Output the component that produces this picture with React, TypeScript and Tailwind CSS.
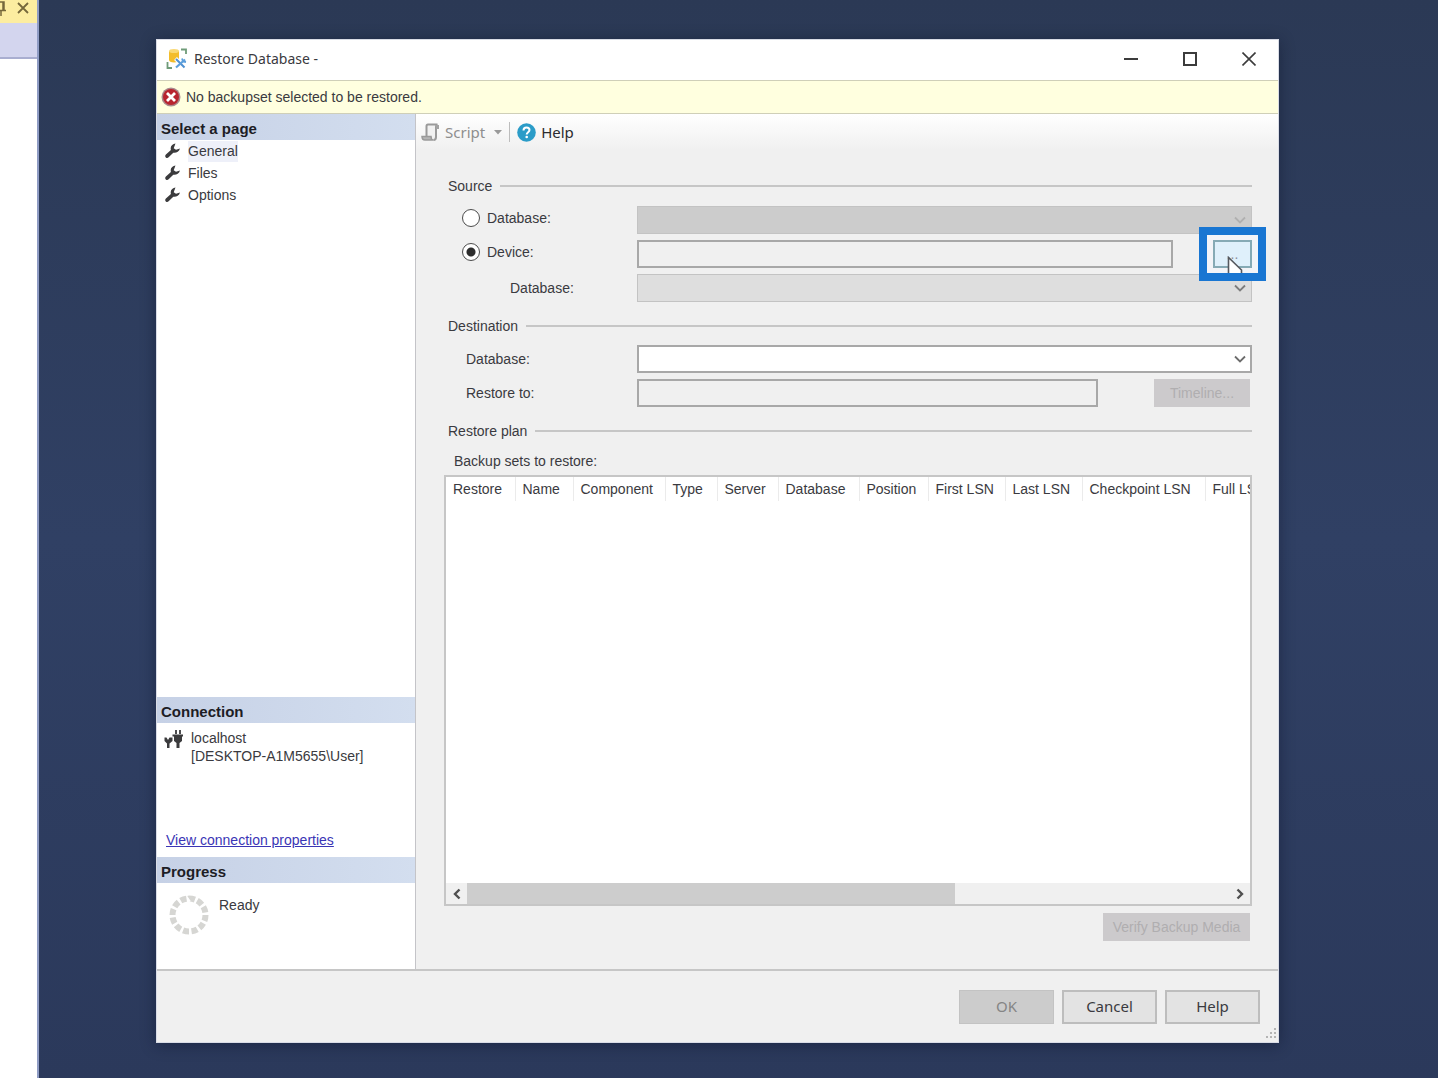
import { useState } from 'react';
import type { ReactNode } from 'react';

const pages = ['General', 'Files', 'Options'];

const columns = [
  { name: 'Restore', width: 'w-[69px]' },
  { name: 'Name', width: 'w-[58px]' },
  { name: 'Component', width: 'w-[92px]' },
  { name: 'Type', width: 'w-[52px]' },
  { name: 'Server', width: 'w-[61px]' },
  { name: 'Database', width: 'w-[81px]' },
  { name: 'Position', width: 'w-[69px]' },
  { name: 'First LSN', width: 'w-[77px]' },
  { name: 'Last LSN', width: 'w-[77px]' },
  { name: 'Checkpoint LSN', width: 'w-[123px]' },
  { name: 'Full LSN', width: 'w-[90px]' },
];

function RestoreIcon() {
  return (
    <svg width="22" height="22" viewBox="0 0 22 22" aria-hidden="true">
      <path d="M3 3v9c0 1.500 2 2.500 5 2.500s5-1 5-2.500V3z" fill="#f3bd2c" />
      <ellipse cx="8" cy="3" rx="5" ry="2" fill="#f9d975" />
      <path d="M15 1.500h5V6" fill="none" stroke="#6f9b78" strokeWidth="1.800" />
      <path d="M1.500 14v6H6" fill="none" stroke="#6f9b78" strokeWidth="1.800" />
      <path d="M9.500 10.500l9 9M18.500 11l-9 8.500" stroke="#fff" strokeWidth="4" />
      <path d="M10 11l8.500 8.500" stroke="#4f8fd0" strokeWidth="2" />
      <path d="M19 11.500l-9 8" stroke="#5d9fdc" strokeWidth="2.200" />
      <path d="M16 10.500l1 3 3 .5" fill="none" stroke="#5d9fdc" strokeWidth="1.800" />
    </svg>
  );
}

function ErrorIcon() {
  return (
    <svg width="20" height="20" viewBox="0 0 20 20" aria-hidden="true">
      <circle cx="10" cy="10" r="9.500" fill="#a9898c" />
      <circle cx="10" cy="10" r="8" fill="#b8242f" />
      <path d="M6 6l8 8M14 6l-8 8" stroke="#fff" strokeWidth="2.800" />
    </svg>
  );
}

function WrenchIcon() {
  return (
    <svg width="16" height="16" viewBox="0 0 16 16" aria-hidden="true">
      <path
        d="M10.500.5C8 .8 5.800 2.600 5.700 5c0 .8 0 1.300.2 1.900L.9 11.600c-.9.800-.9 2-.1 2.800.8.800 2 .8 2.800-.1l4.700-4.600c2.700.5 5.700-.9 6.700-4.200l-4 1.300-2.300-1.600z"
        fill="#3b3b3d"
      />
    </svg>
  );
}

function PlugsIcon() {
  return (
    <svg width="19" height="20" viewBox="0 0 19 20" aria-hidden="true">
      <path d="M12 1v4M16 1v4" stroke="#3b3b3d" strokeWidth="1.800" />
      <path
        d="M8.500 5.500H19v2h-1v4.500l-2.500 2v5h-3v-5L10 12V7.500H8.500zM.5 8.500h2l1.500 2.500 1.500-2.500h3V12L5.500 14.500V19H3v-4.500L.5 12z"
        fill="#3b3b3d"
      />
    </svg>
  );
}

function ScriptIcon() {
  return (
    <svg width="19" height="19" viewBox="0 0 19 19" aria-hidden="true">
      <path
        d="M5.500 13.500V3.200C5.500 2 6 1.500 7 1.500h9.500c-1.200.3-1.500 1-1.500 2.300V14c0 2-.8 3-2.500 3"
        fill="#f1f1f1"
        stroke="#9a9a9a"
        strokeWidth="2"
      />
      <path
        d="M1 13.500h9c0 2 .8 3.500 2.500 3.500H4c-2 0-3-1.500-3-3.500z"
        fill="#b5b5b5"
        stroke="#9a9a9a"
        strokeWidth="1.500"
      />
      <path d="M15 2h3v4h-3z" fill="#a3a3a3" />
    </svg>
  );
}

function Chevron({ className }: { className: string }) {
  return (
    <svg
      width="12"
      height="8"
      viewBox="0 0 12 8"
      aria-hidden="true"
      className={`pointer-events-none absolute right-[6px] top-[10px] ${className}`}
    >
      <path d="M1 1.500l5 5 5-5" fill="none" stroke="currentColor" strokeWidth="1.800" />
    </svg>
  );
}

type ComboProps = {
  id: string;
  label: string;
  className: string;
  arrow: string;
  disabled?: boolean;
};

function Combo({ id, label, className, arrow, disabled }: ComboProps) {
  return (
    <div className="relative flex flex-1">
      <select
        id={id}
        aria-label={label}
        disabled={disabled}
        className={`h-7 w-full appearance-none px-2 outline-none ${className}`}
      />
      <Chevron className={arrow} />
    </div>
  );
}

function GroupTitle({ children }: { children: ReactNode }) {
  return (
    <div className="flex h-5 items-center gap-2 pl-1">
      <h3>{children}</h3>
      <div className="h-[2px] flex-1 bg-[#c6c6c6]" />
    </div>
  );
}

function SideTitle({ children }: { children: ReactNode }) {
  return (
    <h2 className="flex h-[26px] items-center bg-gradient-to-r from-[#c6d1e6] to-[#d3deef] pl-1 pt-1 text-[15px] font-bold text-[#1d1d25]">
      {children}
    </h2>
  );
}

function Sidebar() {
  return (
    <aside className="flex w-[259px] shrink-0 flex-col border-r border-[#c4c4c8] bg-white">
      <SideTitle>Select a page</SideTitle>
      <nav className="flex-1">
        {pages.map((page) => (
          <a key={page} href="#" className="flex h-[22px] items-center gap-[7px] pl-2">
            <WrenchIcon />
            <span className={page === 'General' ? 'bg-[#eef0f9]' : ''}>{page}</span>
          </a>
        ))}
      </nav>

      <SideTitle>Connection</SideTitle>
      <div className="flex h-[134px] flex-col justify-between pb-[6px] pl-[7px] pt-[6px]">
        <div className="flex gap-2">
          <PlugsIcon />
          <p className="leading-[18px]">
            localhost
            <br />
            [DESKTOP-A1M5655\User]
          </p>
        </div>
        <a href="#" className="pl-[2px] text-[#3a35b5] underline">
          View connection properties
        </a>
      </div>

      <SideTitle>Progress</SideTitle>
      <div className="flex h-[86px] items-start gap-[10px] pl-3 pt-3">
        <svg width="40" height="40" viewBox="0 0 40 40" aria-hidden="true">
          <circle
            cx="20"
            cy="20"
            r="16.500"
            fill="none"
            stroke="#d6d6d3"
            strokeWidth="6"
            pathLength="120"
            strokeDasharray="7 3"
          />
        </svg>
        <span>Ready</span>
      </div>
    </aside>
  );
}

function Toolbar() {
  return (
    <div className="flex h-9 items-center bg-gradient-to-b from-white to-[#f0f0f0] pl-[5px] font-['Noto_Sans','Open_Sans',sans-serif] text-[15px]">
      <button type="button" disabled className="flex items-center gap-[5px] text-[#8e8e8e]">
        <ScriptIcon />
        Script
        <svg width="8" height="5" viewBox="0 0 8 5" aria-hidden="true" className="ml-1">
          <path d="M0 0h8L4 4.500z" fill="#9a9a9a" />
        </svg>
      </button>
      <div className="mx-[7px] h-5 w-px bg-[#bdbdbd]" />
      <button type="button" className="flex items-center gap-[5px] text-[#2b2b2e]">
        <svg width="19" height="19" viewBox="0 0 19 19" aria-hidden="true">
          <circle cx="9.500" cy="9.500" r="9.300" fill="#2b9cc8" />
          <path
            d="M6.500 7.500c0-2 1.300-3 3-3s3 1 3 2.600c0 2-2.800 2.200-2.800 4.400"
            fill="none"
            stroke="#fff"
            strokeWidth="2"
          />
          <circle cx="9.700" cy="14" r="1.300" fill="#fff" />
        </svg>
        Help
      </button>
    </div>
  );
}

type SourceRadioProps = {
  label: string;
  checked: boolean;
  onChange: () => void;
};

function SourceRadio({ label, checked, onChange }: SourceRadioProps) {
  return (
    <label className="flex h-6 w-[193px] items-center gap-[7px] pl-[18px]">
      <input
        type="radio"
        name="source"
        checked={checked}
        onChange={onChange}
        className="size-[18px] appearance-none rounded-full border border-[#4c4c4c] bg-white checked:bg-[radial-gradient(circle,#2d2d2d_0_4px,white_5px)]"
      />
      {label}
    </label>
  );
}

function BrowseButton() {
  return (
    <div className="relative z-10 ml-10 w-[39px]">
      <div className="absolute -inset-x-[14px] -top-[13px] h-[54px] border-8 border-[#1976d2] bg-[#f3f4f8]" />
      <button
        type="button"
        aria-label="Browse for device"
        className="relative flex h-7 w-full items-center justify-center border-2 border-[#86aab5] bg-[#dff0fb] text-[#8a8f9c]"
      >
        ...
      </button>
      {/* Mouse pointer */}
      <svg
        width="18"
        height="17"
        viewBox="0 0 18 17"
        aria-hidden="true"
        className="absolute left-[14px] top-4"
      >
        <path d="M1.500 17V1.500L15 14v3z" fill="#fff" />
        <path d="M1.500 17V1.500L14.500 14v3" fill="none" stroke="#55585e" strokeWidth="1.600" />
      </svg>
    </div>
  );
}

function BackupSets() {
  return (
    <div className="mt-1 flex min-h-[200px] flex-1 flex-col border-2 border-[#c6c6c6] bg-white">
      <div className="w-0 min-w-full flex-1 overflow-hidden">
        <table className="w-[849px] table-fixed">
          <thead>
            <tr>
              {columns.map((column) => (
                <th
                  key={column.name}
                  scope="col"
                  className={`h-6 whitespace-nowrap border-r border-[#ebebeb] pl-[7px] text-left font-normal ${column.width}`}
                >
                  {column.name}
                </th>
              ))}
            </tr>
          </thead>
        </table>
      </div>
      <div className="flex h-[21px] bg-[#f0f0f0] text-[#505050]">
        <button type="button" aria-label="Scroll left" className="flex w-[21px] items-center justify-center">
          <svg width="8" height="12" viewBox="0 0 8 12" aria-hidden="true">
            <path d="M6.500 1.500L2 6l4.500 4.500" fill="none" stroke="currentColor" strokeWidth="2.400" />
          </svg>
        </button>
        <div className="flex-1">
          <div className="h-full w-[64%] bg-[#cdcdcd]" />
        </div>
        <button type="button" aria-label="Scroll right" className="flex w-[21px] items-center justify-center">
          <svg width="8" height="12" viewBox="0 0 8 12" aria-hidden="true">
            <path d="M1.500 1.500L6 6l-4.500 4.500" fill="none" stroke="currentColor" strokeWidth="2.400" />
          </svg>
        </button>
      </div>
    </div>
  );
}

function GeneralPage() {
  const [source, setSource] = useState('device');

  return (
    <section className="flex min-w-0 flex-1 flex-col">
      <Toolbar />
      <div className="flex flex-1 flex-col pb-7 pl-7 pr-[26px] pt-[26px]">
        {/* Source */}
        <GroupTitle>Source</GroupTitle>
        <div className="mt-[10px] flex flex-col gap-[6px]">
          <div className="flex">
            <SourceRadio
              label="Database:"
              checked={source === 'database'}
              onChange={() => setSource('database')}
            />
            <Combo
              id="source-database"
              label="Source database"
              disabled
              className="border border-[#c3c3c3] bg-[#cccccc]"
              arrow="text-[#b0b0b0]"
            />
          </div>
          <div className="flex">
            <SourceRadio
              label="Device:"
              checked={source === 'device'}
              onChange={() => setSource('device')}
            />
            <input
              type="text"
              aria-label="Device"
              readOnly
              className="h-7 min-w-0 flex-1 border-2 border-[#a8a8a8] bg-[#f0f0f0] px-2 outline-none"
            />
            <BrowseButton />
          </div>
          <div className="flex items-center">
            <label htmlFor="device-database" className="w-[193px] pl-[66px]">
              Database:
            </label>
            <Combo
              id="device-database"
              label="Device database"
              disabled
              className="border border-[#c3c3c3] bg-[#dedede]"
              arrow="text-[#7c7c7c]"
            />
          </div>
        </div>

        {/* Destination */}
        <div className="mt-[14px]">
          <GroupTitle>Destination</GroupTitle>
        </div>
        <div className="mt-[9px] flex flex-col gap-[6px]">
          <div className="flex items-center">
            <label htmlFor="target-database" className="w-[193px] pl-[22px]">
              Database:
            </label>
            <Combo
              id="target-database"
              label="Destination database"
              className="border-2 border-[#a8a8a8] bg-white"
              arrow="text-[#6c6c6c]"
            />
          </div>
          <div className="flex items-center">
            <label htmlFor="restore-to" className="w-[193px] pl-[22px]">
              Restore to:
            </label>
            <input
              id="restore-to"
              type="text"
              readOnly
              className="h-7 min-w-0 flex-1 border-2 border-[#a8a8a8] bg-[#f0f0f0] px-2 outline-none"
            />
            <button
              type="button"
              disabled
              className="ml-[56px] mr-[2px] h-7 w-[96px] bg-[#cccacc] text-[#b0aeb0]"
            >
              Timeline...
            </button>
          </div>
        </div>

        {/* Restore plan */}
        <div className="mt-[14px]">
          <GroupTitle>Restore plan</GroupTitle>
        </div>
        <p className="mt-[10px] pl-[10px] leading-5">Backup sets to restore:</p>
        <BackupSets />
        <button
          type="button"
          disabled
          className="mr-[2px] mt-[7px] h-7 w-[147px] self-end bg-[#cccacc] text-[#b0aeb0]"
        >
          Verify Backup Media
        </button>
      </div>
    </section>
  );
}

function RestoreDialog() {
  return (
    <div
      role="dialog"
      aria-labelledby="dialog-title"
      className="flex flex-1 flex-col border border-[#d9dce6] bg-[#f0f0f0] shadow-[0_2px_14px_rgba(10,18,40,0.45)]"
    >
      <header className="flex h-10 items-center bg-white pb-[3px] pl-[9px]">
        <RestoreIcon />
        <h1
          id="dialog-title"
          className="ml-[6px] flex-1 font-['Noto_Sans','Open_Sans',sans-serif] text-[14px]"
        >
          Restore Database -
        </h1>
        <div className="flex text-[#3c3c3c]">
          <button type="button" aria-label="Minimize" className="flex w-[59px] justify-center">
            <svg width="14" height="14" viewBox="0 0 14 14">
              <path d="M0 7h14" stroke="currentColor" strokeWidth="2" />
            </svg>
          </button>
          <button type="button" aria-label="Maximize" className="flex w-[59px] justify-center">
            <svg width="14" height="14" viewBox="0 0 14 14">
              <path d="M1 1h12v12H1z" fill="none" stroke="currentColor" strokeWidth="2" />
            </svg>
          </button>
          <button type="button" aria-label="Close" className="flex w-[59px] justify-center">
            <svg width="14" height="14" viewBox="0 0 14 14">
              <path d="M.5.5l13 13M13.500.5l-13 13" stroke="currentColor" strokeWidth="1.600" />
            </svg>
          </button>
        </div>
      </header>

      <div
        role="alert"
        className="flex h-[34px] items-center gap-[5px] border-y border-[#cfcfb8] bg-[#ffffdf] pl-1"
      >
        <ErrorIcon />
        No backupset selected to be restored.
      </div>

      <div className="flex flex-1 border-b-2 border-[#c6c6c6]">
        <Sidebar />
        <GeneralPage />
      </div>

      <footer className="relative flex h-[71px] items-center justify-end gap-2 pr-[18px] font-['Noto_Sans','Open_Sans',sans-serif] text-[15px]">
        <button
          type="button"
          disabled
          className="h-[34px] w-[95px] border border-[#c3c3c3] bg-[#cccccc] text-[#858585]"
        >
          OK
        </button>
        <button type="button" className="h-[34px] w-[95px] border-2 border-[#bdbdbd] bg-[#e3e3e3]">
          Cancel
        </button>
        <button type="button" className="h-[34px] w-[95px] border-2 border-[#bdbdbd] bg-[#e3e3e3]">
          Help
        </button>
        <svg
          width="12"
          height="12"
          viewBox="0 0 12 12"
          aria-hidden="true"
          className="absolute bottom-[2px] right-[1px]"
        >
          <path
            d="M9 0h2v2H9zM5 4h2v2H5zM9 4h2v2H9zM1 8h2v2H1zM5 8h2v2H5zM9 8h2v2H9z"
            fill="#b4b4b4"
          />
        </svg>
      </footer>
    </div>
  );
}

function DockedPanel() {
  return (
    <div className="flex w-[39px] shrink-0 flex-col border-r-2 border-[#8f9cc4] bg-white">
      <div className="flex h-[23px] items-start justify-between bg-[#fceda0] pr-2 text-[#75683b]">
        <svg width="8" height="16" viewBox="0 0 8 16" aria-hidden="true">
          <path d="M0 2h4v8M0 10.500h6M1 10v6M3 2v8" fill="none" stroke="currentColor" strokeWidth="1.500" />
        </svg>
        <button type="button" aria-label="Close panel" className="pt-[2px]">
          <svg width="12" height="12" viewBox="0 0 12 12">
            <path d="M1 1l10 10M11 1L1 11" stroke="currentColor" strokeWidth="1.800" />
          </svg>
        </button>
      </div>
      <div className="h-9 border-b-2 border-[#a9aed0] bg-[#d3d5ee]" />
    </div>
  );
}

function App() {
  return (
    <div className="flex min-h-screen bg-gradient-to-b from-[#2b3955] via-[#304064] to-[#2b395b] font-['Liberation_Sans',Arial,sans-serif] text-[14px] text-[#3a3a40]">
      <DockedPanel />
      <main className="flex flex-1 pb-[35px] pl-[117px] pr-[159px] pt-[39px]">
        <RestoreDialog />
      </main>
    </div>
  );
}

export default App;
